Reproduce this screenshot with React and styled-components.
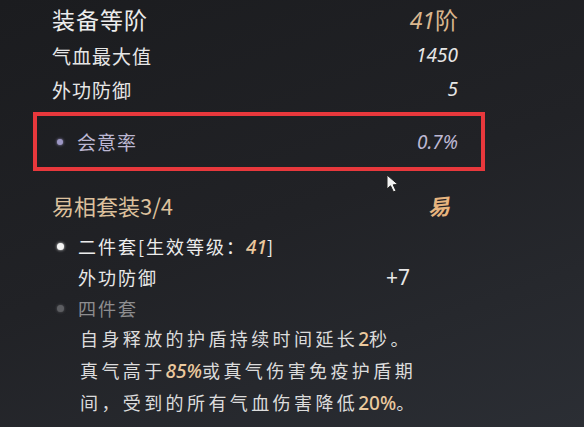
import React from 'react'
import styled, {createGlobalStyle} from 'styled-components'

const GlobalStyle = createGlobalStyle`
  html, body {
    margin: 0;
    padding: 0;
  }
  body {
    background: linear-gradient(160deg, #1b1c1f 0%, #212226 50%, #2b2e34 100%);
    font-family: "Noto Sans CJK SC", "Noto Sans", sans-serif;
    color: #e4e4e4;
  }
`

const Panel = styled.div`
  position: relative;
  box-sizing: border-box;
  width: 584px;
  height: 427px;
  overflow: hidden;
  padding: 0 126px 0 52px;
`

const TitleRow = styled.div`
  display: flex;
  justify-content: space-between;
  align-items: center;
  height: 38px;
  font-size: 23px;
  letter-spacing: 1px;
  color: #ececec;
`

const StatRow = styled.div`
  display: flex;
  justify-content: space-between;
  align-items: center;
  height: 34px;
  font-size: 19px;
  letter-spacing: 1px;
  color: ${p => p.$color || '#e6e6e6'};
`

const Value = styled.span`
  font-family: "Noto Sans", "Noto Sans CJK SC", sans-serif;
  font-style: italic;
  letter-spacing: 0;
  color: ${p => p.$color || 'inherit'};
`

const Unit = styled.span`
  font-style: normal;
  font-family: "Noto Sans CJK SC", sans-serif;
`

const Highlight = styled.div`
  display: flex;
  align-items: center;
  justify-content: space-between;
  box-sizing: border-box;
  height: 59px;
  margin: 6px -27px 0 -19px;
  padding: 0 23px 0 20px;
  border: 4px solid #e8383c;
  font-size: 19px;
  letter-spacing: 1px;
  color: #bdb8d3;
`

const Label = styled.span`
  display: flex;
  align-items: center;
  gap: 14px;
`

const Dot = styled.span`
  width: ${p => p.$size || 6}px;
  height: ${p => p.$size || 6}px;
  border-radius: 50%;
  background: ${p => p.$color};
  box-shadow: 0 0 3px ${p => p.$color};
`

const SetHeader = styled.div`
  display: flex;
  justify-content: space-between;
  align-items: center;
  height: 36px;
  margin-top: 16px;
  font-size: 22px;
  color: #ddc19d;
`

const SetMark = styled.span`
  margin-right: 6px;
  font-size: 22px;
  font-weight: bold;
  color: #e7b57f;
  transform: skewX(-14deg) rotate(-6deg);
`

const SetList = styled.div`
  margin-top: 8px;
  padding-left: 5px;
`

const Item = styled.div`
  display: grid;
  grid-template-columns: 21px 1fr;
  align-items: center;
  height: 30px;
  font-size: 18px;
  letter-spacing: 2px;
  color: ${p => p.$color || '#ececec'};
`

const SubRow = styled.div`
  display: grid;
  grid-template-columns: 308px auto;
  align-items: center;
  height: 32px;
  padding-left: 21px;
  font-size: 18px;
  letter-spacing: 2px;
  color: #e8e8e8;
`

const Plus = styled.span`
  font-family: "Noto Sans", sans-serif;
  font-size: 21px;
  letter-spacing: 0;
`

const Desc = styled.div`
  padding-left: 23px;
  font-size: 18px;
  line-height: 31px;
  letter-spacing: 3.4px;
  color: #dcdcdc;
`

const Hi = styled.span`
  font-family: "Noto Sans", sans-serif;
  font-style: ${p => (p.$italic ? 'italic' : 'normal')};
  font-weight: 500;
  letter-spacing: 0;
  font-size: 19px;
  color: #ebc99e;
`

const Cursor = styled.svg`
  position: absolute;
  left: 386px;
  top: 174px;
  width: 16px;
  height: 20px;
`

export default function App() {
  return (
    <>
      <GlobalStyle />
      <Panel>
        <TitleRow>
          <span>装备等阶</span>
          <Value $color="#d9b68e">41<Unit>阶</Unit></Value>
        </TitleRow>
        <StatRow>
          <span>气血最大值</span>
          <Value>1450</Value>
        </StatRow>
        <StatRow>
          <span>外功防御</span>
          <Value>5</Value>
        </StatRow>

        <Highlight>
          <Label>
            <Dot $color="#9d97c4" />
            会意率
          </Label>
          <Value>0.7%</Value>
        </Highlight>

        <SetHeader>
          <span>易相套装3/4</span>
          <SetMark>易</SetMark>
        </SetHeader>

        <SetList>
          <Item>
            <Dot $color="#f4f4f4" $size={7} />
            <span>二件套[生效等级：<Hi $italic>41</Hi>]</span>
          </Item>
          <SubRow>
            <span>外功防御</span>
            <Plus>+7</Plus>
          </SubRow>
          <Item $color="#8d8d8f">
            <Dot $color="#5c5d61" $size={7} />
            <span>四件套</span>
          </Item>
          <Desc>
            自身释放的护盾持续时间延长<Hi>2</Hi>秒。<br />
            真气高于<Hi $italic>85%</Hi>或真气伤害免疫护盾期<br />
            间，受到的所有气血伤害降低<Hi>20%</Hi>。
          </Desc>
        </SetList>

        <Cursor viewBox="0 0 16 20">
          <path d="M1 1 L1 15 L4.5 11.8 L7.5 18 L10 16.8 L7.2 10.8 L12 10.5 Z" fill="#f2f2f2" stroke="#222" strokeWidth="1" />
        </Cursor>
      </Panel>
    </>
  )
}
